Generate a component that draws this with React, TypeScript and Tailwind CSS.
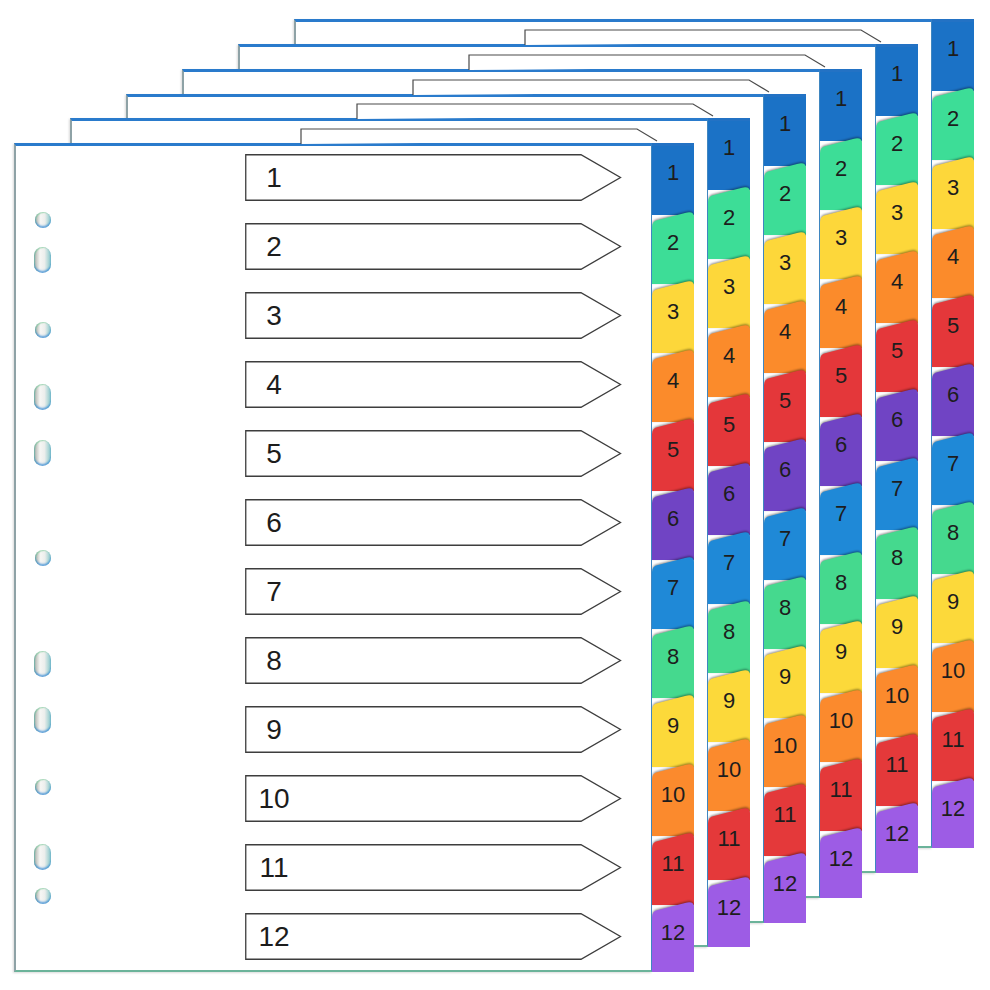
import React from "react";

const tabColors = [
  "#1b72c6",
  "#3ddd97",
  "#fdd73a",
  "#fb8b2b",
  "#e4373a",
  "#7044c4",
  "#1f89d7",
  "#45d98e",
  "#fcd93a",
  "#fb8a2d",
  "#e4393a",
  "#9d5ce5",
];

// sheet positions, back to front
const sheets = [
  { left: "left-[294px]", top: "top-[19px]" },
  { left: "left-[238px]", top: "top-[44px]" },
  { left: "left-[182px]", top: "top-[69px]" },
  { left: "left-[126px]", top: "top-[94px]" },
  { left: "left-[70px]", top: "top-[118px]" },
  { left: "left-[14px]", top: "top-[143px]" },
];

const holes = [
  { mt: "mt-[66px]", long: false },
  { mt: "mt-[19px]", long: true },
  { mt: "mt-[49px]", long: false },
  { mt: "mt-[46px]", long: true },
  { mt: "mt-[30px]", long: true },
  { mt: "mt-[84px]", long: false },
  { mt: "mt-[85px]", long: true },
  { mt: "mt-[30px]", long: true },
  { mt: "mt-[46px]", long: false },
  { mt: "mt-[49px]", long: true },
  { mt: "mt-[18px]", long: false },
];

const Hole = ({ long, mt }: { long: boolean; mt: string }) => (
  <div
    className={`${mt} ${
      long ? "h-[26px] w-[17px]" : "h-[16px] w-[16px]"
    } rounded-full bg-[linear-gradient(90deg,#a9ada6_0%,#f6f6f4_35%,#eceeec_62%,#86c6c8_100%)] shadow-[inset_0_-2px_2px_rgba(40,130,210,0.7),inset_1px_1px_1px_rgba(120,200,150,0.6)]`}
  />
);

const LabelArrow = ({ n }: { n: number }) => (
  <div className="relative h-[47px] w-[377px]">
    <svg className="absolute inset-0" width="377" height="47" viewBox="0 0 377 47">
      <polygon
        points="0.75,0.75 336,0.75 375.5,23.5 336,46.25 0.75,46.25"
        fill="#ffffff"
        stroke="#3d3d3d"
        strokeWidth="1.3"
      />
    </svg>
    <div className="relative flex h-full w-[58px] items-center justify-center text-[28px] leading-none text-[#1c1c1c]">
      {n}
    </div>
  </div>
);

const Tab = ({ i }: { i: number }) => {
  const color = tabColors[i];
  if (i === 0) {
    return (
      <div className="relative flex h-[69px] shrink-0 justify-center bg-[#1b72c6] pt-[16px] text-[22px] leading-[22px] text-[#1d1d1d]">
        1
      </div>
    );
  }
  return (
    <div className="relative -mt-[14px] flex h-[83px] shrink-0 justify-center pt-[31px] text-[22px] leading-[22px] text-[#1d1d1d]">
      <svg
        className="absolute inset-0 drop-shadow-[0_-1px_1px_rgba(0,0,0,0.45)]"
        width="42"
        height="83"
        viewBox="0 0 42 83"
      >
        <path d="M0,90 L0,26 Q0,20 6,19 L33,12 Q42,9.5 42,16 L42,90 Z" fill={color} />
      </svg>
      <span className="relative">{i + 1}</span>
    </div>
  );
};

const TabStrip = () => (
  <div className="flex h-full w-[42px] flex-col overflow-hidden border-t-[3px] border-t-[#2372c4] shadow-[inset_-2px_0_2px_rgba(0,0,0,0.12)]">
    {tabColors.map((_, i) => (
      <Tab key={i} i={i} />
    ))}
  </div>
);

const Sheet = ({ pos, front, behind }: { pos: { left: string; top: string }; front: boolean; behind: boolean }) => (
  <div className={`absolute ${pos.left} ${pos.top} flex h-[829px] w-[680px]`}>
    {behind && (
      <svg className="absolute left-[286px] top-[-15px]" width="360" height="16" viewBox="0 0 360 16">
        <polyline points="1,16 1,1 337,1 357,13" fill="#ffffff" stroke="#4a4a4a" strokeWidth="1.2" />
      </svg>
    )}
    <div className="flex h-full w-[638px] border-b-2 border-l-2 border-r border-t-[3px] border-b-[#6bb39a] border-l-[#8ea2a6] border-r-[#3f86c0] border-t-[#2a7bcc] bg-white shadow-[-1px_1px_2px_rgba(0,0,0,0.15)]">
      {front && (
        <>
          <div className="ml-[18px] flex w-[17px] flex-col items-center">
            {holes.map((h, i) => (
              <Hole key={i} long={h.long} mt={h.mt} />
            ))}
          </div>
          <div className="ml-[194px] flex flex-col gap-[22px] pt-[8px]">
            {Array.from({ length: 12 }, (_, i) => (
              <LabelArrow key={i} n={i + 1} />
            ))}
          </div>
        </>
      )}
    </div>
    <TabStrip />
  </div>
);

export default function App() {
  return (
    <div className="relative h-[990px] w-[990px] overflow-hidden bg-white font-['Liberation_Sans',Arial,sans-serif]">
      {sheets.map((s, i) => (
        <Sheet key={i} pos={s} front={i === sheets.length - 1} behind={i > 0} />
      ))}
    </div>
  );
}
